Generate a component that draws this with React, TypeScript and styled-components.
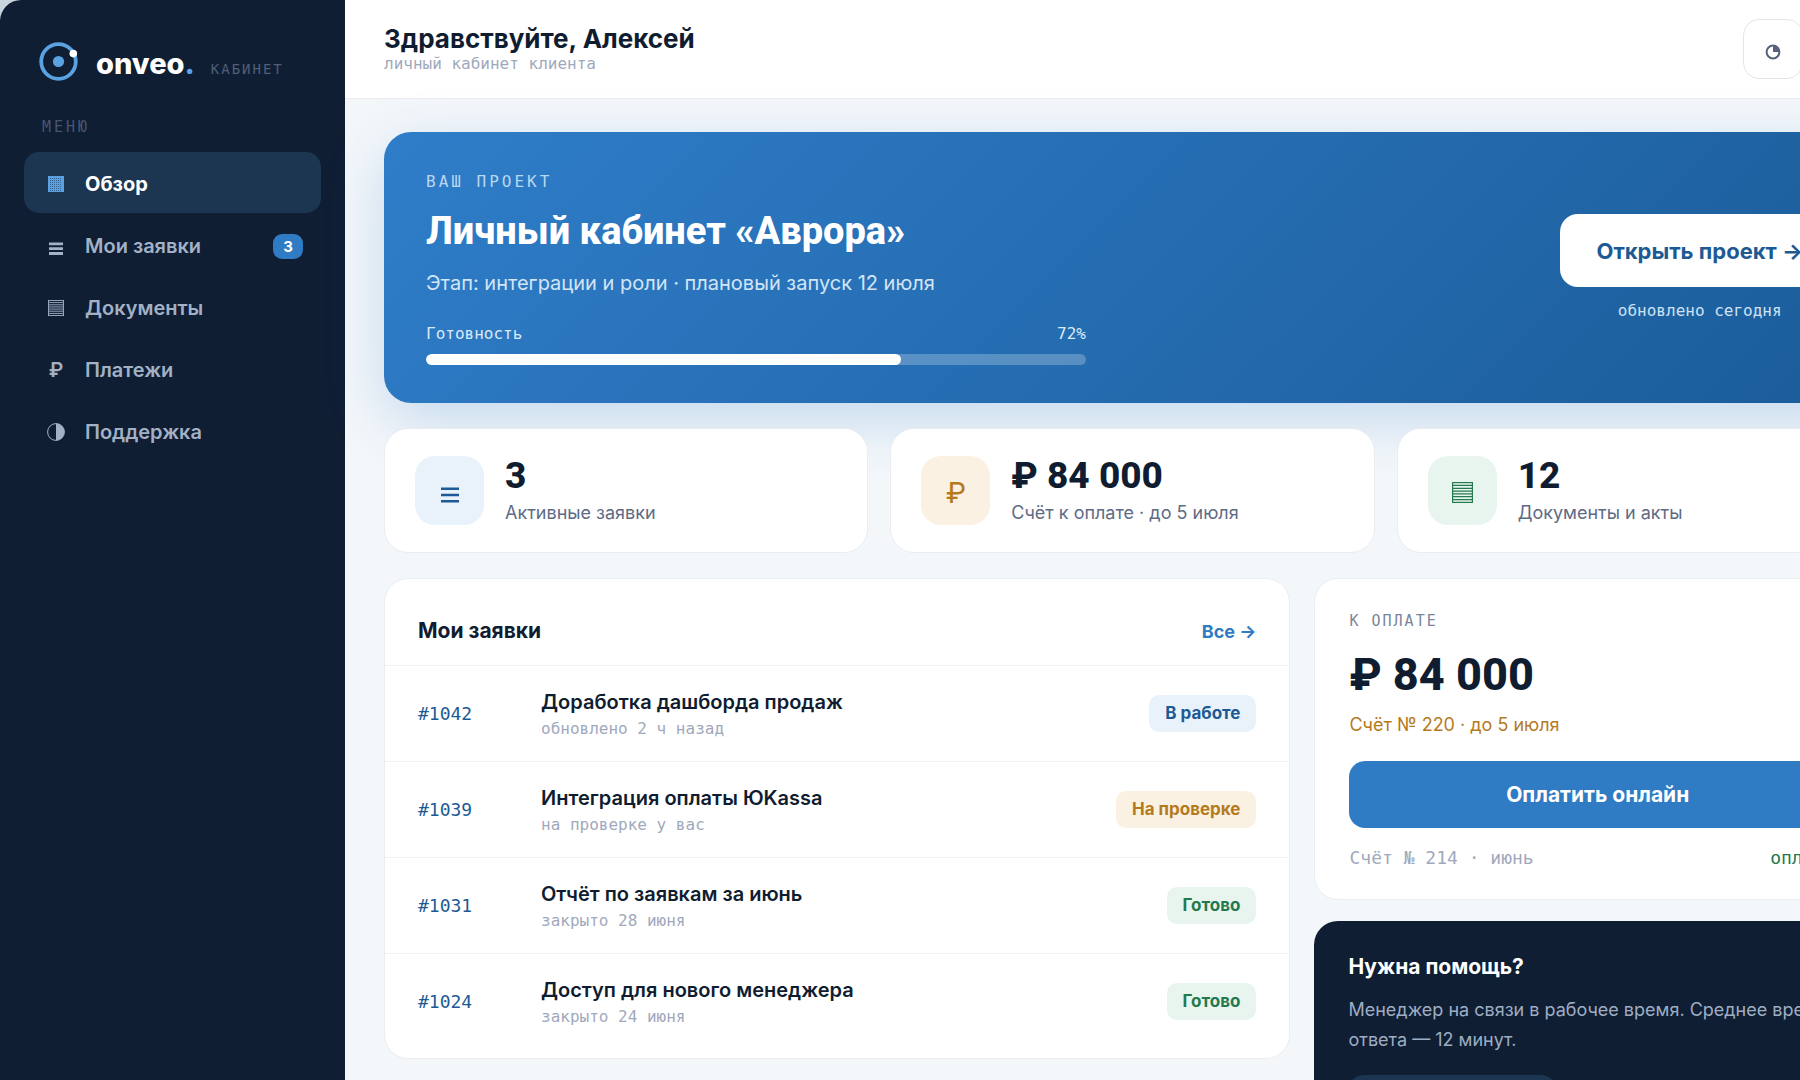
import React from "react";
import styled, { createGlobalStyle } from "styled-components";

const sans = `Inter, "Noto Sans", sans-serif`;
const display = `Roboto, Inter, sans-serif`;
const mono = `"DejaVu Sans Mono", "Liberation Mono", monospace`;

const color = {
  navy: "#0f1e33",
  navyLight: "#1c3550",
  ink: "#101d30",
  slate: "#5e6b85",
  faint: "#a0a9bc",
  line: "#e9edf1",
  canvas: "#f4f7fa",
  blue: "#2f7bc4",
  deepBlue: "#1d5a94",
  sky: "#5ba2e3",
  amber: "#b67a1e",
  green: "#24794f",
};

const GlobalStyle = createGlobalStyle`
  *, *::before, *::after { box-sizing: border-box; }
  html, body { margin: 0; height: 100%; overflow: hidden; }
  body { background: #c9d5de; color: ${color.ink}; font-family: ${sans}; }
  h1, h2, h3, p, ul { margin: 0; padding: 0; }
  ul { list-style: none; }
  a { text-decoration: none; color: inherit; }
  button { border: 0; font-family: inherit; cursor: pointer; }
`;

const Frame = styled.div`
  display: flex;
  width: calc(100% + 120px);
  height: 100vh;
  overflow: hidden;
  border-radius: 21px 0 0 0;
  background: ${color.canvas};
`;

const Sidebar = styled.aside`
  flex: 0 0 345px;
  padding: 42px 24px;
  background: ${color.navy};
`;

const Brand = styled.div`
  display: flex;
  align-items: flex-start;
  gap: 18px;
  padding: 0 15px;
`;

const Wordmark = styled.div`
  display: flex;
  align-items: baseline;
  gap: 16px;
  line-height: 43px;
`;

const Name = styled.span`
  font-size: 29px;
  font-weight: 800;
  color: #fff;
`;

const Accent = styled.span`
  color: ${color.sky};
`;

const Tag = styled.span`
  font: 14px ${mono};
  letter-spacing: 2px;
  text-transform: uppercase;
  color: #4f5f78;
`;

const MenuCaption = styled.h2`
  margin: 32px 0 15px;
  padding-left: 18px;
  font: 400 15px/20px ${mono};
  letter-spacing: 3px;
  text-transform: uppercase;
  color: #465671;
`;

const Menu = styled.ul`
  display: grid;
  gap: 1px;
`;

const MenuLink = styled.a<{ $active?: boolean }>`
  display: flex;
  align-items: center;
  gap: 15px;
  height: 61px;
  padding: 3px 18px 0;
  border-radius: 15px;
  font-size: 20px;
  font-weight: ${(p) => (p.$active ? 700 : 600)};
  color: ${(p) => (p.$active ? "#fff" : "#a2b1c6")};
  background: ${(p) => (p.$active ? color.navyLight : "transparent")};
`;

const MenuIcon = styled.span<{ $active?: boolean }>`
  display: grid;
  place-items: center;
  width: 28px;
  color: ${(p) => (p.$active ? color.sky : "inherit")};
`;

const Counter = styled.span`
  min-width: 30px;
  margin-left: auto;
  border-radius: 9px;
  font-size: 15px;
  font-weight: 700;
  line-height: 25px;
  text-align: center;
  color: #fff;
  background: ${color.blue};
`;

const Main = styled.main`
  flex: 1;
  min-width: 0;
`;

const Header = styled.header`
  display: flex;
  align-items: center;
  gap: 18px;
  height: 99px;
  padding: 0 39px;
  border-bottom: 1px solid ${color.line};
  background: #fff;
`;

const Greeting = styled.div`
  margin-right: auto;
`;

const GreetingTitle = styled.h1`
  font-size: 26px;
  font-weight: 700;
  line-height: 30px;
`;

const Note = styled.p<{ $line?: number }>`
  font: 16px/${(p) => p.$line ?? 22}px ${mono};
  color: ${color.faint};
`;

const IconButton = styled.button`
  display: grid;
  place-items: center;
  width: 60px;
  height: 60px;
  padding: 6px 0 0;
  border: 1px solid #e2e5ea;
  border-radius: 16px;
  color: #55627a;
  background: #fff;
`;

const Avatar = styled.span`
  display: grid;
  place-items: center;
  width: 60px;
  height: 60px;
  border-radius: 16px;
  font-size: 20px;
  font-weight: 700;
  color: #fff;
  background: ${color.blue};
`;

const Content = styled.div`
  display: grid;
  gap: 25px;
  padding: 33px 39px;
`;

const Hero = styled.section`
  display: flex;
  align-items: center;
  justify-content: space-between;
  padding: 38px 42px;
  border-radius: 27px;
  color: #fff;
  background: linear-gradient(135deg, #2f7dc9, #1b5c99);
  box-shadow: 0 18px 60px rgba(47, 125, 201, 0.24);
`;

const Project = styled.div`
  flex: 0 1 660px;
`;

const HeroCaption = styled.p`
  font: 16px/24px ${mono};
  letter-spacing: 3px;
  text-transform: uppercase;
  color: #b9d6f0;
`;

const HeroTitle = styled.h2`
  margin: 12px 0 11px;
  font: 800 38px/51px ${display};
`;

const HeroText = styled.p`
  font-size: 20px;
  line-height: 30px;
  color: #d3e5f5;
`;

const ProgressLabel = styled.div`
  display: flex;
  justify-content: space-between;
  margin: 24px 0 8px;
  font: 16px/24px ${mono};
  color: #dbeaf8;
`;

const Track = styled.div`
  height: 11px;
  border-radius: 6px;
  overflow: hidden;
  background: rgba(255, 255, 255, 0.24);
`;

const Fill = styled.div`
  height: 100%;
  border-radius: 6px;
  background: #fff;
`;

const HeroAction = styled.div`
  display: grid;
  gap: 12px;
  padding-top: 2px;
  text-align: center;
`;

const OpenButton = styled.button`
  height: 73px;
  padding: 0 36px;
  border-radius: 18px;
  font-size: 22px;
  font-weight: 700;
  color: ${color.deepBlue};
  background: #fff;
`;

const Updated = styled.p`
  font: 16px/24px ${mono};
  color: #cfe2f4;
`;

const Stats = styled.section`
  display: grid;
  grid-template-columns: repeat(3, 1fr);
  gap: 22px;
`;

const Card = styled.section`
  border: 1px solid ${color.line};
  border-radius: 24px;
  background: #fff;
`;

const Stat = styled(Card)`
  display: flex;
  align-items: center;
  gap: 21px;
  height: 125px;
  padding: 0 30px;
`;

type Tone = "blue" | "amber" | "green";
const tones: Record<Tone, { fg: string; bg: string }> = {
  blue: { fg: color.deepBlue, bg: "#e9f2fb" },
  amber: { fg: color.amber, bg: "#fbf1e2" },
  green: { fg: color.green, bg: "#e8f5ee" },
};

const StatIcon = styled.span<{ $tone: Tone }>`
  display: grid;
  place-items: center;
  flex: none;
  width: 69px;
  height: 69px;
  padding-top: 3px;
  border-radius: 20px;
  font-size: 29px;
  color: ${(p) => tones[p.$tone].fg};
  background: ${(p) => tones[p.$tone].bg};
`;

const StatValue = styled.p`
  font: 800 37px/39px ${display};
`;

const StatLabel = styled.p`
  margin-top: 4px;
  font-size: 18px;
  line-height: 27px;
  color: ${color.slate};
`;

const Columns = styled.div`
  display: grid;
  grid-template-columns: 1.6fr 1fr;
  align-items: start;
  gap: 24px;
`;

const SideColumn = styled.div`
  display: grid;
  gap: 21px;
`;

const Requests = styled(Card)`
  padding-bottom: 9px;
`;

const RequestsHead = styled.div`
  display: flex;
  align-items: baseline;
  justify-content: space-between;
  padding: 36px 33px 18px;
`;

const CardTitle = styled.h3`
  font-size: 21px;
  font-weight: 700;
  line-height: 32px;
`;

const AllLink = styled.a`
  font-size: 18px;
  font-weight: 700;
  color: ${color.blue};
`;

const Request = styled.li`
  display: grid;
  grid-template-columns: 123px 1fr auto;
  align-items: center;
  height: 96px;
  padding: 0 33px;
  border-top: 1px solid #eff2f4;
`;

const RequestId = styled.span`
  font: 18px/27px ${mono};
  color: ${color.deepBlue};
`;

const RequestTitle = styled.h4`
  margin: 0 0 1px;
  font-size: 20px;
  font-weight: 600;
  line-height: 30px;
`;

const Badge = styled.span<{ $tone: Tone }>`
  padding: 0 16px;
  border-radius: 10px;
  font-size: 17px;
  font-weight: 700;
  line-height: 37px;
  color: ${(p) => tones[p.$tone].fg};
  background: ${(p) => tones[p.$tone].bg};
`;

const Payment = styled(Card)`
  padding: 32px 34px 28px;
`;

const PaymentCaption = styled.h3`
  font: 400 15px/20px ${mono};
  letter-spacing: 2px;
  text-transform: uppercase;
  color: #7c869a;
`;

const Amount = styled.p`
  margin: 14px 0 6px;
  font: 800 45px/60px ${display};
`;

const Due = styled.p`
  font-size: 18px;
  line-height: 27px;
  color: ${color.amber};
`;

const PayButton = styled.button`
  display: block;
  width: 100%;
  height: 67px;
  margin: 23px 0 16px;
  border-radius: 16px;
  font-size: 21px;
  font-weight: 700;
  color: #fff;
  background: ${color.blue};
`;

const PastInvoice = styled.div`
  display: flex;
  justify-content: space-between;
  font: 18px/27px ${mono};
  color: ${color.faint};
`;

const Paid = styled.span`
  color: ${color.green};
`;

const Help = styled.section`
  padding: 30px 34px;
  border-radius: 24px;
  color: #fff;
  background: ${color.navy};
`;

const HelpText = styled.p`
  margin: 12px 0 20px;
  font-size: 18px;
  line-height: 30px;
  color: #9fadc2;
`;

const ChatButton = styled.button`
  height: 60px;
  padding: 0 36px;
  border-radius: 16px;
  font-size: 18px;
  font-weight: 700;
  color: #fff;
  background: ${color.navyLight};
`;

const Logo = () => (
  <svg width="39" height="39" viewBox="0 0 39 39" fill="none" aria-hidden="true">
    <circle cx="19.5" cy="19.5" r="17.3" stroke={color.sky} strokeWidth="3.8" />
    <circle cx="19.5" cy="19.5" r="5.6" fill={color.sky} />
    <circle cx="34.3" cy="11.6" r="3.8" fill="#fff" />
  </svg>
);

const GridIcon = () => (
  <svg width="16" height="16" viewBox="0 0 16 16" aria-hidden="true">
    <rect width="16" height="16" fill="currentColor" />
    <path
      d="M2.5 2v13M4.5 2v13M6.5 2v13M8.5 2v13M10.5 2v13M12.5 2v13"
      stroke={color.navyLight}
      strokeWidth="1"
      strokeDasharray="1 1"
      opacity="0.6"
    />
  </svg>
);

const LinesIcon = ({ size, weight }: { size: number; weight: number }) => (
  <svg width={size} height={(size * 4) / 3} viewBox="0 0 18 24" aria-hidden="true">
    <path d="M0 8.8h18M0 15h18M0 21.2h18" stroke="currentColor" strokeWidth={weight} />
  </svg>
);

const SheetIcon = ({ size }: { size: number }) => (
  <svg width={size} height={size} viewBox="0 0 21 21" fill="none" stroke="currentColor" aria-hidden="true">
    <rect x="0.6" y="0.6" width="19.8" height="19.8" strokeWidth="1.2" />
    <path d="M1 3.4h19M1 6.3h19M1 9.1h19M1 11.9h19M1 14.7h19M1 17.6h19" strokeWidth="1.2" />
  </svg>
);

const HalfCircleIcon = () => (
  <svg width="18" height="18" viewBox="0 0 18 18" aria-hidden="true">
    <circle cx="9" cy="9" r="8.4" fill="none" stroke="currentColor" />
    <path d="M9 .6a8.4 8.4 0 0 1 0 16.8z" fill="currentColor" />
  </svg>
);

const ClockIcon = () => (
  <svg width="16" height="16" viewBox="0 0 16 16" aria-hidden="true">
    <circle cx="8" cy="8" r="6.4" fill="none" stroke="currentColor" strokeWidth="2" />
    <path d="M8 1.6A6.4 6.4 0 0 1 14.4 8H8z" fill="currentColor" />
  </svg>
);

const menu = [
  { label: "Обзор", icon: <GridIcon />, active: true },
  { label: "Мои заявки", icon: <LinesIcon size={14} weight={3.6} />, count: 3 },
  { label: "Документы", icon: <SheetIcon size={16} /> },
  { label: "Платежи", icon: "₽" },
  { label: "Поддержка", icon: <HalfCircleIcon /> },
];

const stats: { tone: Tone; icon: React.ReactNode; value: string; label: string }[] = [
  { tone: "blue", icon: <LinesIcon size={18} weight={2.6} />, value: "3", label: "Активные заявки" },
  { tone: "amber", icon: "₽", value: "₽ 84 000", label: "Счёт к оплате · до 5 июля" },
  { tone: "green", icon: <SheetIcon size={21} />, value: "12", label: "Документы и акты" },
];

const requests: { id: string; title: string; note: string; status: string; tone: Tone }[] = [
  { id: "#1042", title: "Доработка дашборда продаж", note: "обновлено 2 ч назад", status: "В работе", tone: "blue" },
  { id: "#1039", title: "Интеграция оплаты ЮKassa", note: "на проверке у вас", status: "На проверке", tone: "amber" },
  { id: "#1031", title: "Отчёт по заявкам за июнь", note: "закрыто 28 июня", status: "Готово", tone: "green" },
  { id: "#1024", title: "Доступ для нового менеджера", note: "закрыто 24 июня", status: "Готово", tone: "green" },
];

const progress = 72;

export default function App() {
  return (
    <>
      <GlobalStyle />
      <Frame>
        <Sidebar>
          <Brand>
            <Logo />
            <Wordmark>
              <Name>
                onveo<Accent>.</Accent>
              </Name>
              <Tag>Кабинет</Tag>
            </Wordmark>
          </Brand>
          <nav aria-label="Меню">
            <MenuCaption>Меню</MenuCaption>
            <Menu>
              {menu.map((item) => (
                <li key={item.label}>
                  <MenuLink href="#" $active={item.active}>
                    <MenuIcon $active={item.active}>{item.icon}</MenuIcon>
                    {item.label}
                    {item.count && <Counter>{item.count}</Counter>}
                  </MenuLink>
                </li>
              ))}
            </Menu>
          </nav>
        </Sidebar>

        <Main>
          <Header>
            <Greeting>
              <GreetingTitle>Здравствуйте, Алексей</GreetingTitle>
              <Note $line={20}>личный кабинет клиента</Note>
            </Greeting>
            <IconButton aria-label="История">
              <ClockIcon />
            </IconButton>
            <Avatar>А</Avatar>
          </Header>

          <Content>
            <Hero>
              <Project>
                <HeroCaption>Ваш проект</HeroCaption>
                <HeroTitle>Личный кабинет «Аврора»</HeroTitle>
                <HeroText>Этап: интеграции и роли · плановый запуск 12 июля</HeroText>
                <ProgressLabel>
                  <span>Готовность</span>
                  <span>{progress}%</span>
                </ProgressLabel>
                <Track role="progressbar" aria-label="Готовность" aria-valuenow={progress}>
                  <Fill style={{ width: `${progress}%` }} />
                </Track>
              </Project>
              <HeroAction>
                <OpenButton>Открыть проект →</OpenButton>
                <Updated>обновлено сегодня</Updated>
              </HeroAction>
            </Hero>

            <Stats>
              {stats.map((s) => (
                <Stat key={s.label}>
                  <StatIcon $tone={s.tone}>{s.icon}</StatIcon>
                  <div>
                    <StatValue>{s.value}</StatValue>
                    <StatLabel>{s.label}</StatLabel>
                  </div>
                </Stat>
              ))}
            </Stats>

            <Columns>
              <Requests>
                <RequestsHead>
                  <CardTitle>Мои заявки</CardTitle>
                  <AllLink href="#">Все →</AllLink>
                </RequestsHead>
                <ul>
                  {requests.map((r) => (
                    <Request key={r.id}>
                      <RequestId>{r.id}</RequestId>
                      <div>
                        <RequestTitle>{r.title}</RequestTitle>
                        <Note>{r.note}</Note>
                      </div>
                      <Badge $tone={r.tone}>{r.status}</Badge>
                    </Request>
                  ))}
                </ul>
              </Requests>

              <SideColumn>
                <Payment>
                  <PaymentCaption>К оплате</PaymentCaption>
                  <Amount>₽ 84 000</Amount>
                  <Due>Счёт № 220 · до 5 июля</Due>
                  <PayButton>Оплатить онлайн</PayButton>
                  <PastInvoice>
                    <span>Счёт № 214 · июнь</span>
                    <Paid>оплачен</Paid>
                  </PastInvoice>
                </Payment>
                <Help>
                  <CardTitle>Нужна помощь?</CardTitle>
                  <HelpText>Менеджер на связи в рабочее время. Среднее время ответа — 12 минут.</HelpText>
                  <ChatButton>Написать в чат</ChatButton>
                </Help>
              </SideColumn>
            </Columns>
          </Content>
        </Main>
      </Frame>
    </>
  );
}
